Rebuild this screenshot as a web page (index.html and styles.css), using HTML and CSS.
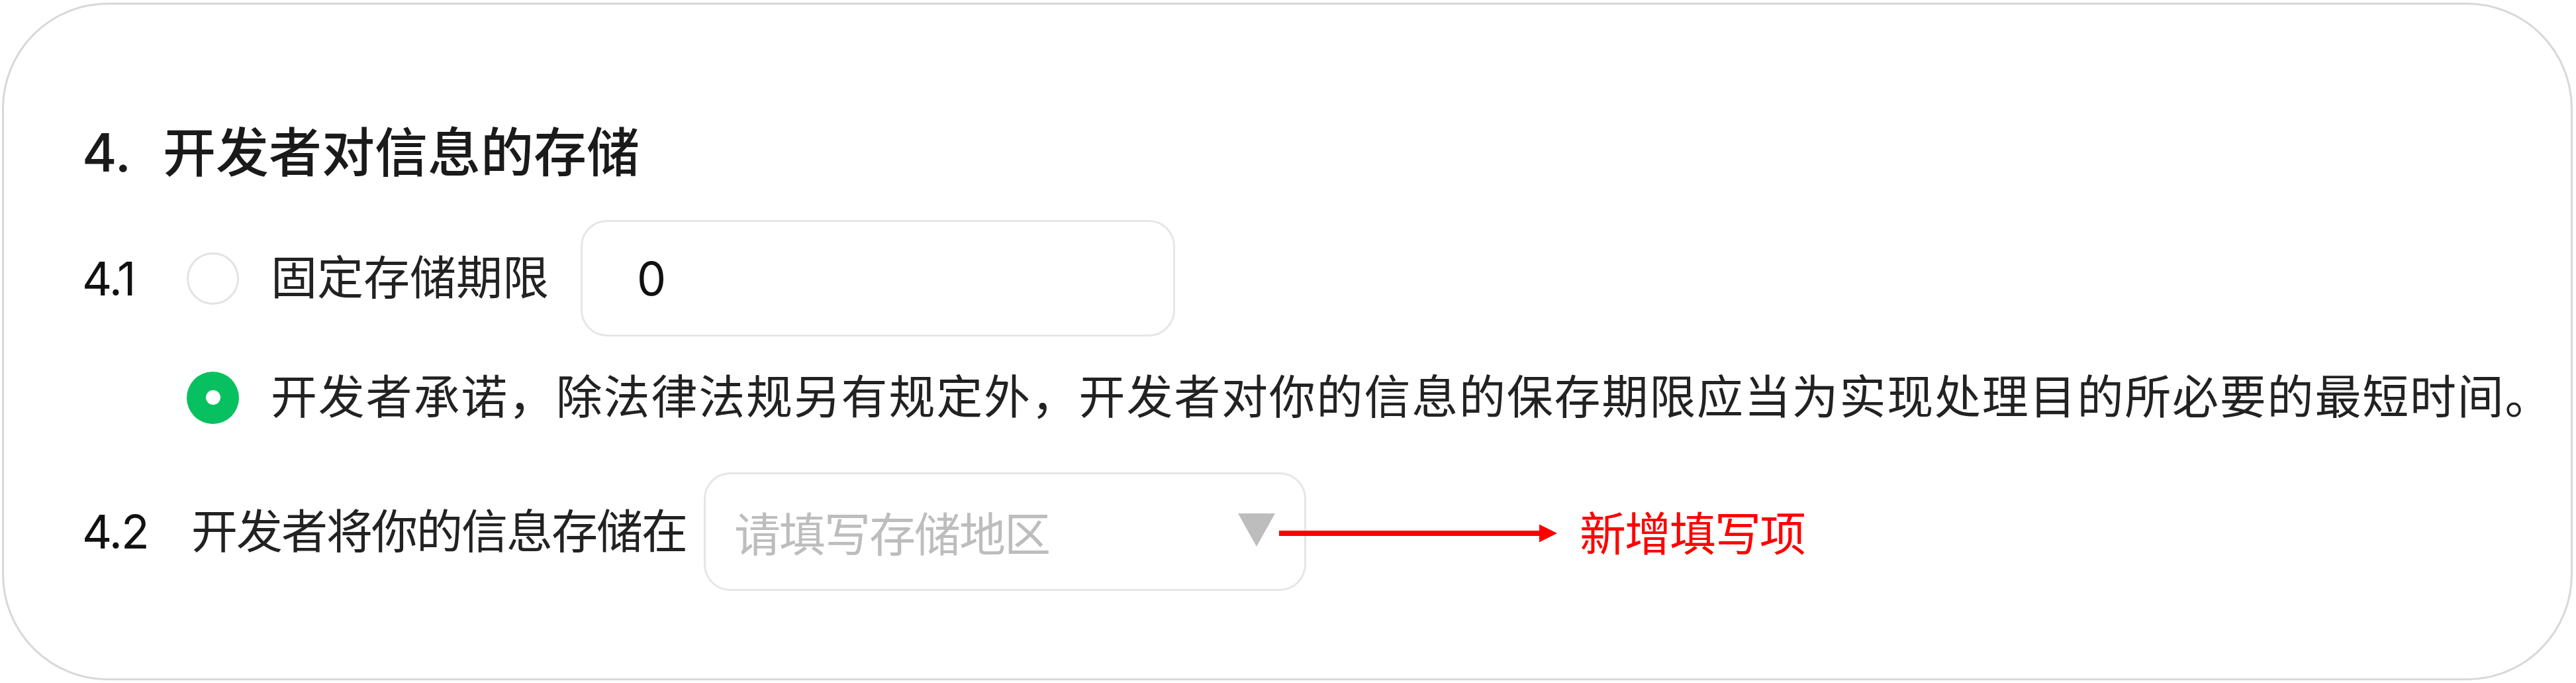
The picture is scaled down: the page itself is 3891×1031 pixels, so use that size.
FILE: index.html
```html
<!DOCTYPE html>
<html lang="zh-CN">
<head>
<meta charset="utf-8">
<title>开发者对信息的存储</title>
<link rel="stylesheet" href="styles.css">
</head>
<body>
<section class="card">
  <h2 class="title"><span class="title-num">4.</span>开发者对信息的存储</h2>

  <div class="row row-fixed">
    <span class="label">4.1</span>
    <span class="radio"></span>
    <span class="text">固定存储期限</span>
    <div class="input"><span class="value">0</span></div>
  </div>

  <div class="row row-promise">
    <span class="radio radio-on"></span>
    <span class="text text-wide">开发者承诺，除法律法规另有规定外，开发者对你的信息的保存期限应当为实现处理目的所必要的最短时间。</span>
  </div>

  <div class="row row-region">
    <span class="label label-wide">4.2</span>
    <span class="text text-narrow">开发者将你的信息存储在</span>
    <div class="select">
      <span class="placeholder">请填写存储地区</span>
      <span class="caret"></span>
    </div>
    <div class="note">
      <svg class="arrow" width="420" height="28" viewBox="0 0 420 28">
        <rect x="0" y="10" width="396" height="8" fill="#ff0000"/>
        <polygon points="393,0.5 420,14 393,27.5" fill="#ff0000"/>
      </svg>
      <span class="note-text">新增填写项</span>
    </div>
  </div>
</section>
</body>
</html>
```

FILE: styles.css
```css
html, body {
  margin: 0;
  padding: 0;
  background: #ffffff;
}

body {
  font-family: Inter, "Noto Sans CJK SC", sans-serif;
  color: #222222;
}

.card {
  box-sizing: border-box;
  margin: 4px 5px 0 3px;
  height: 1023px;
  border: 3px solid #d8d8d8;
  border-radius: 160px;
  padding: 173px 0 0 118px;
  background: #ffffff;
}

.title {
  margin: 0;
  font-size: 80px;
  line-height: 100px;
  font-weight: 500;
  color: #1a1a1a;
  display: flex;
  align-items: center;
}

.title-num {
  display: inline-block;
  width: 122px;
  font-weight: 500;
}

.row {
  display: flex;
  align-items: center;
}

.row-fixed {
  margin-top: 52px;
  height: 176px;
}

.row-promise {
  margin-top: 42px;
  height: 100px;
  padding-left: 158px;
}

.row-region {
  margin-top: 63px;
  height: 179px;
}

.label {
  width: 158px;
  flex: none;
  font-size: 70px;
  letter-spacing: -2px;
  color: #111111;
}

.label-wide {
  width: 165px;
}

.radio {
  box-sizing: border-box;
  flex: none;
  width: 79px;
  height: 79px;
  border: 3px solid #e3e3e3;
  border-radius: 50%;
  margin-right: 48px;
  display: flex;
  align-items: center;
  justify-content: center;
}

.radio-on {
  border: none;
  background: #07c160;
}

.radio-on::after {
  content: "";
  width: 22px;
  height: 22px;
  border-radius: 50%;
  background: #ffffff;
}

.text {
  font-size: 70px;
  line-height: 100px;
  white-space: nowrap;
}

.text-wide {
  letter-spacing: 1.8px;
}

.text-narrow {
  letter-spacing: -2px;
}

.input {
  box-sizing: border-box;
  margin-left: 48px;
  width: 898px;
  height: 176px;
  border: 3px solid #e6e6e6;
  border-radius: 40px;
  padding-left: 82px;
  display: flex;
  align-items: center;
}

.value {
  font-size: 70px;
  color: #111111;
}

.select {
  box-sizing: border-box;
  flex: none;
  margin-left: 26px;
  width: 910px;
  height: 179px;
  border: 3px solid #e6e6e6;
  border-radius: 40px;
  padding: 0 44px 0 43px;
  display: flex;
  align-items: center;
  justify-content: space-between;
}

.placeholder {
  font-size: 70px;
  letter-spacing: -2px;
  color: #bdbdbd;
}

.caret {
  width: 0;
  height: 0;
  border-left: 28px solid transparent;
  border-right: 28px solid transparent;
  border-top: 50px solid #bdbdbd;
  margin-top: -6px;
}

.note {
  display: flex;
  align-items: center;
  margin-left: -41px;
  margin-top: 4px;
}

.arrow {
  display: block;
  flex: none;
}

.note-text {
  margin-left: 34px;
  font-size: 70px;
  letter-spacing: -2px;
  color: #ff0000;
  margin-top: -6px;
}
```
